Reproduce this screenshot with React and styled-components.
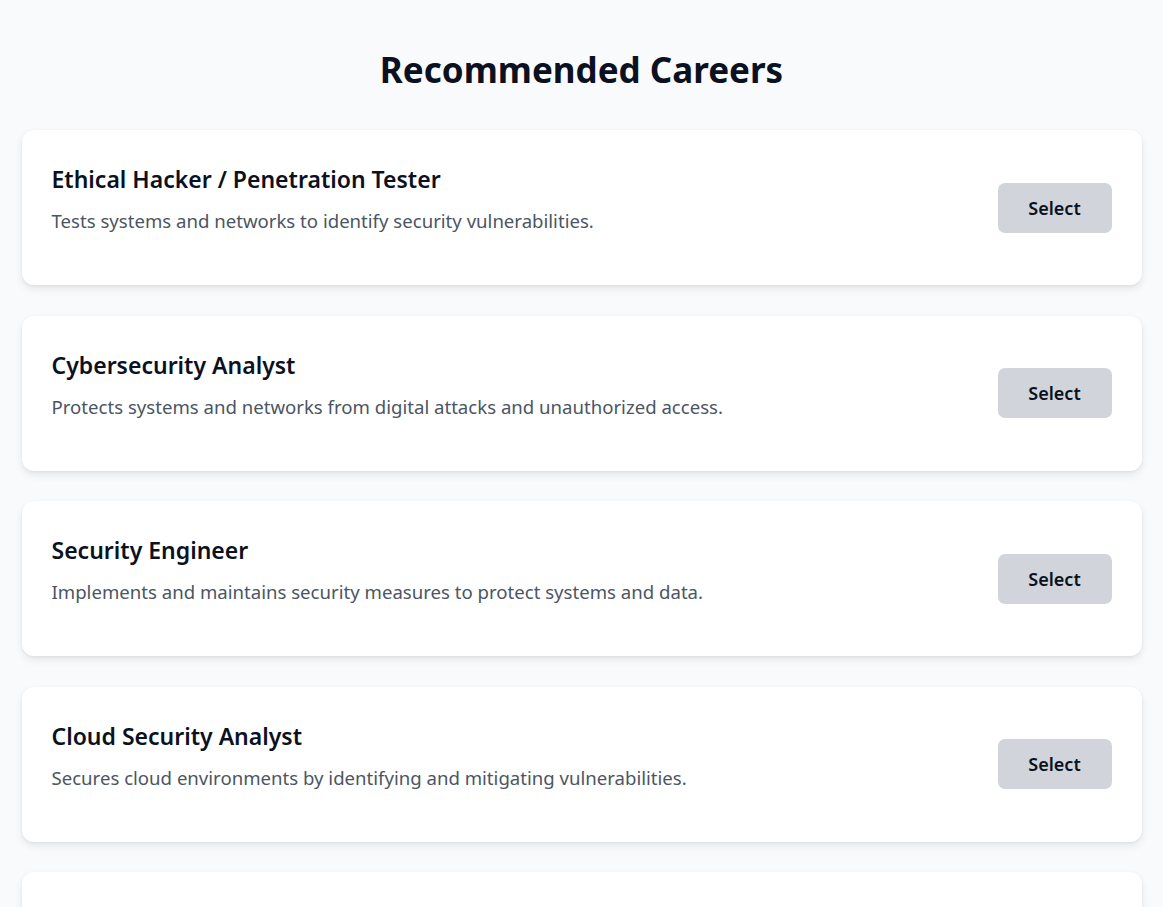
import React from 'react';
import styled, { createGlobalStyle } from 'styled-components';

const GlobalStyle = createGlobalStyle`
    html, body {
        margin: 0;
        padding: 0;
        background: #f9fafb;
    }
    body {
        font-family: 'Noto Sans', 'Open Sans', sans-serif;
        color: #111827;
    }
`;

const Page = styled.div`
    max-width: 1120px;
    margin: 0 auto;
    padding: 20px 0;
    min-height: 100vh;
    box-sizing: border-box;
`;

const Heading = styled.h1`
    margin: 30px 0 40px;
    font-size: 35px;
    line-height: 40px;
    font-weight: 700;
    text-align: center;
    color: #0b1120;
`;

const List = styled.div`
    display: flex;
    flex-direction: column;
    gap: 30.5px;
`;

const Card = styled.div`
    display: flex;
    align-items: center;
    justify-content: space-between;
    gap: 24px;
    background: white;
    border-radius: 12px;
    padding: 30px;
    box-shadow: 0 4px 8px rgba(0, 0, 0, 0.08), 0 1px 3px rgba(0, 0, 0, 0.06);
`;

const Info = styled.div`
    display: flex;
    flex-direction: column;
`;

const Title = styled.h2`
    margin: 3px 0 0;
    font-size: 23px;
    line-height: 32px;
    font-weight: 600;
    color: #0b1120;
`;

const Description = styled.p`
    margin: 12px 0 20px;
    font-size: 18.6px;
    line-height: 28px;
    color: #4b5563;
`;

const SelectButton = styled.button`
    flex-shrink: 0;
    width: 114px;
    height: 50px;
    background: #d1d5db;
    border: none;
    border-radius: 7px;
    font-family: inherit;
    font-size: 18px;
    font-weight: 600;
    color: #0b1120;
    cursor: pointer;

    &:hover {
        background: #c4c8cf;
    }
`;

const careers = [
    {
        title: 'Ethical Hacker / Penetration Tester',
        description: 'Tests systems and networks to identify security vulnerabilities.',
    },
    {
        title: 'Cybersecurity Analyst',
        description: 'Protects systems and networks from digital attacks and unauthorized access.',
    },
    {
        title: 'Security Engineer',
        description: 'Implements and maintains security measures to protect systems and data.',
    },
    {
        title: 'Cloud Security Analyst',
        description: 'Secures cloud environments by identifying and mitigating vulnerabilities.',
    },
    {
        title: 'Security Architect',
        description: 'Designs secure infrastructures and defines security standards for organizations.',
    },
];

export default function App() {
    return (
        <>
            <GlobalStyle />
            <Page>
                <Heading>Recommended Careers</Heading>
                <List>
                    {careers.map((career) => (
                        <Card key={career.title}>
                            <Info>
                                <Title>{career.title}</Title>
                                <Description>{career.description}</Description>
                            </Info>
                            <SelectButton>Select</SelectButton>
                        </Card>
                    ))}
                </List>
            </Page>
        </>
    );
}
